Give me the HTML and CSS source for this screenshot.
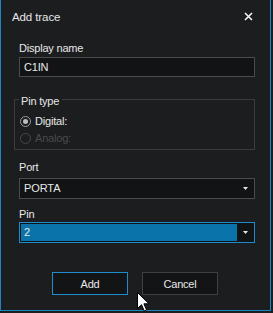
FILE: index.html
```html
<!DOCTYPE html>
<html>
<head>
<meta charset="utf-8">
<link rel="stylesheet" href="styles.css">
</head>
<body>
<div class="win">
  <div class="titlebar">
    <span class="title">Add trace</span>
    <svg class="close" width="9" height="9" viewBox="0 0 9 9"><path d="M1 1L8 8M8 1L1 8" stroke="#f2f2f2" stroke-width="1.6" fill="none"/></svg>
  </div>
  <div class="content">
    <div class="lbl lbl-name">Display name</div>
    <div class="input">C1IN</div>
    <fieldset class="group">
      <legend class="legend">Pin type</legend>
      <div class="radio first"><span class="circle checked"></span><span>Digital:</span></div>
      <div class="radio disabled"><span class="circle"></span><span>Analog:</span></div>
    </fieldset>
    <div class="lbl lbl-port">Port</div>
    <div class="select">
      <span class="value">PORTA</span>
      <span class="arrow"><svg width="5" height="3" viewBox="0 0 5 3"><path d="M0 0H5L2.5 3Z" fill="#e6e6e6"/></svg></span>
    </div>
    <div class="lbl lbl-pin">Pin</div>
    <div class="select focused">
      <span class="value">2</span>
      <span class="arrow"><svg width="5" height="3" viewBox="0 0 5 3"><path d="M0 0H5L2.5 3Z" fill="#e6e6e6"/></svg></span>
    </div>
    <div class="buttons">
      <button class="btn primary">Add</button>
      <button class="btn">Cancel</button>
    </div>
  </div>
  <svg class="cursor" width="13" height="21" viewBox="0 0 13 21"><path d="M0.5 0.5V16.5L4.5 12.7L7.3 19L9.6 18L6.9 11.8H12Z" fill="#fff" stroke="#000" stroke-width="1"/></svg>
</div>
</body>
</html>
```

FILE: styles.css
```css
html, body {
  margin: 0;
  padding: 0;
  background: #1b1d1f;
}
body {
  width: 273px;
  height: 313px;
  overflow: hidden;
  font-family: "Liberation Sans", Arial, sans-serif;
  font-size: 11px;
  color: #e8e8e8;
}
.win {
  position: relative;
  width: 269px;
  height: 310px;
  border-left: 1px solid #1a86c0;
  border-right: 1px solid #1a86c0;
  border-bottom: 1px solid #1a86c0;
  background: #1b1d1f;
}
.titlebar {
  height: 33px;
  display: flex;
  align-items: center;
  justify-content: space-between;
  padding: 0 17px 0 11px;
}
.title {
  font-size: 11.5px;
  letter-spacing: -0.1px;
  color: #e6e6e6;
}
.close {
  margin-top: 0px;
}
.content {
  padding: 0 15px 0 13px;
  display: flex;
  flex-direction: column;
}
.lbl {
  line-height: 16px;
  padding-left: 5px;
  letter-spacing: -0.2px;
}
.lbl-name { margin-top: 7px; }
.lbl-port { margin-top: 9px; }
.lbl-pin { margin-top: 7px; }
.input {
  margin-left: 5px;
  margin-top: 1px;
  height: 18px;
  line-height: 18px;
  border: 1px solid #4b4b4b;
  background: #111315;
  padding-left: 4px;
  letter-spacing: -0.2px;
}
.group {
  margin: 12px 0 0 0;
  padding: 0 4px 2px 4px;
  border: 1px solid #3c3c3c;
  min-width: 0;
}
.legend {
  padding: 4px 3px 0 2px;
  line-height: 16px;
  letter-spacing: -0.2px;
}
.radio {
  display: flex;
  align-items: center;
  height: 17px;
  line-height: 17px;
  letter-spacing: -0.2px;
}
.radio.first { margin-top: 4px; }
.circle {
  box-sizing: border-box;
  width: 11px;
  height: 11px;
  border: 1px solid #9a9a9a;
  border-radius: 50%;
  margin: 0 4px 0 1px;
  display: flex;
  align-items: center;
  justify-content: center;
}
.circle.checked::after {
  content: "";
  width: 5px;
  height: 5px;
  border-radius: 50%;
  background: #bdbdbd;
}
.radio.disabled { color: #4a4a4a; }
.radio.disabled .circle { border-color: #4a4a4a; }
.select {
  margin: 3px 0 0 5px;
  height: 19px;
  border: 1px solid #4b4b4b;
  background: #111315;
  display: flex;
}
.lbl-pin + .select { margin-top: 0; }
.select .value {
  flex: 1;
  line-height: 19px;
  padding-left: 4px;
  letter-spacing: -0.1px;
}
.select .arrow {
  width: 17px;
  display: flex;
  align-items: center;
  justify-content: center;
}
.select.focused {
  border-color: #1e8ccc;
}
.select.focused .value {
  background: #0a74aa;
  margin: 1px 0 1px 1px;
  line-height: 17px;
  padding-left: 3px;
}
.buttons {
  display: flex;
  justify-content: center;
  gap: 14px;
  margin-top: 29px;
  padding-left: 1px;
}
.btn {
  width: 76px;
  height: 23px;
  border: 1px solid #3f3f3f;
  background: #121416;
  color: #e8e8e8;
  font-family: "Liberation Sans", Arial, sans-serif;
  font-size: 11px;
  letter-spacing: -0.2px;
  padding: 0;
}
.btn.primary {
  border-color: #1e8ccc;
}
.cursor {
  position: absolute;
  left: 136px;
  top: 292px;
}
```
